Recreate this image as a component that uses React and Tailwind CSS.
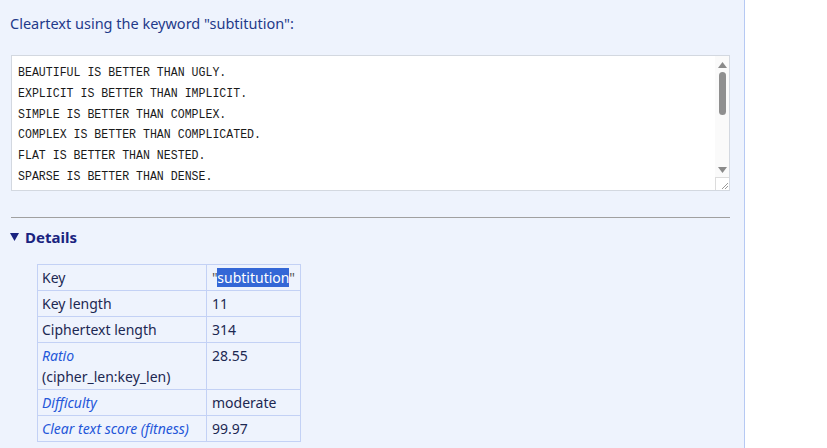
const lines = [
  'BEAUTIFUL IS BETTER THAN UGLY.',
  'EXPLICIT IS BETTER THAN IMPLICIT.',
  'SIMPLE IS BETTER THAN COMPLEX.',
  'COMPLEX IS BETTER THAN COMPLICATED.',
  'FLAT IS BETTER THAN NESTED.',
  'SPARSE IS BETTER THAN DENSE.',
]

function FakeScrollbar() {
  return (
    <div className="w-[14px] bg-[#fafafa] flex flex-col items-center">
      <svg className="mt-[6px]" width="9" height="6" viewBox="0 0 9 6">
        <path d="M4.5 0L9 6H0z" fill="#8a8a8a" />
      </svg>
      <div className="mt-[4px] w-[7px] h-[43px] rounded-full bg-[#8f8f8f]" />
      <div className="flex-1" />
      <svg className="mb-[4px]" width="9" height="6" viewBox="0 0 9 6">
        <path d="M0 0H9L4.5 6z" fill="#8a8a8a" />
      </svg>
      <div className="w-[14px] h-[13px] bg-white border-l border-t border-[#dcdcdc] relative">
        <svg className="absolute right-0 bottom-0" width="10" height="10" viewBox="0 0 10 10">
          <path d="M9 3L3 9M9 6L6 9" stroke="#9a9a9a" strokeWidth="1" />
        </svg>
      </div>
    </div>
  )
}

function Row({ label, value, italic, sub }) {
  return (
    <tr>
      <td className={`border border-[#c3d1f5] align-top pl-[4px] pr-[3px] py-[2px] ${italic ? 'italic text-[#2557d9]' : 'text-[#1c2852]'}`}>
        {label}
        {sub && <div className="not-italic text-[#1c2852]">{sub}</div>}
      </td>
      <td className="border border-[#c3d1f5] align-top pl-[5px] pr-[4px] py-[2px] text-[#1c2852]">{value}</td>
    </tr>
  )
}

export default function App() {
  return (
    <div className="flex bg-white h-[448px] overflow-hidden font-['Noto_Sans',sans-serif]">
      <div className="w-[745px] h-[448px] bg-[#eef3fd] border-r border-[#b6c9f3] pl-[10px] pr-[14px] pt-[12px]">
        <h2 className="text-[14.5px] leading-[22px] text-[#1f3a8a]">
          Cleartext using the keyword "subtitution":
        </h2>

        <div className="mt-[21px] ml-[1px] h-[136px] bg-white border border-[#d3d8e0] flex">
          <div className="flex-1 pl-[6px] pt-[7px] text-[#1a1a1a]">
            <div className="origin-top-left scale-x-[0.89] font-['Liberation_Mono',monospace] text-[13px] leading-[20.8px] whitespace-nowrap">
              {lines.map((l) => (
                <div key={l}>{l}</div>
              ))}
            </div>
          </div>
          <FakeScrollbar />
        </div>

        {/* rule */}
        <div className="mt-[26px] ml-[1px] h-px bg-[#a0a0a0]" />

        {/* Details */}
        <div className="mt-[8px] flex items-center gap-[6px] text-[15px] leading-[22px] font-bold text-[#1a2380]">
          <svg width="9" height="8" viewBox="0 0 9 8">
            <path d="M0 0H9L4.5 8z" fill="#1a2380" />
          </svg>
          Details
        </div>

        <table className="mt-[16px] ml-[27px] border-collapse text-[14px] leading-[21px]">
          <tbody>
            <tr>
              <td className="border border-[#c3d1f5] w-[169px] pl-[4px] py-[2px] text-[#1c2852]">Key</td>
              <td className="border border-[#c3d1f5] w-[94px] pl-[5px] pr-[4px] py-[2px] text-[#1c2852]">
                <span className="text-[#555]">"</span>
                <span className="bg-[#3467d6] text-white">subtitution</span>
                <span className="text-[#555]">"</span>
              </td>
            </tr>
            <Row label="Key length" value="11" />
            <Row label="Ciphertext length" value="314" />
            <Row label="Ratio" sub="(cipher_len:key_len)" value="28.55" italic />
            <Row label="Difficulty" value="moderate" italic />
            <Row label="Clear text score (fitness)" value="99.97" italic />
          </tbody>
        </table>
      </div>
      <div className="flex-1 bg-white" />
    </div>
  )
}
